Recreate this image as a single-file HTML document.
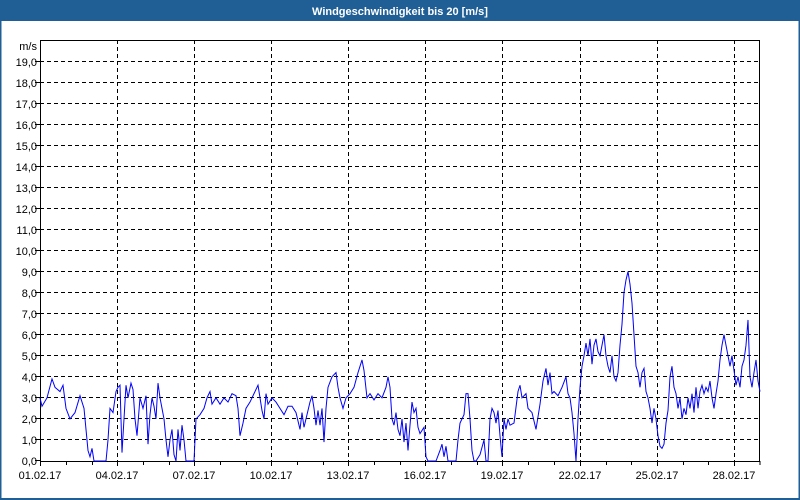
<!DOCTYPE html>
<html><head><style>
body{margin:0;width:800px;height:500px;overflow:hidden;background:#fff;font-family:"Liberation Sans",Tahoma,sans-serif}
</style></head><body>
<svg width="800" height="500" xmlns="http://www.w3.org/2000/svg" style="display:block">
<rect x="0" y="0" width="800" height="500" fill="#fff"/>
<rect x="0" y="0" width="800" height="21" fill="#1f5f95"/>
<rect x="0.5" y="20" width="799" height="479" fill="none" stroke="#1f5f95" stroke-width="2"/>
<text x="400" y="15" text-anchor="middle" fill="#fff" font-size="11" font-weight="bold" font-family="Liberation Sans, sans-serif">Windgeschwindigkeit bis 20 [m/s]</text>
<g stroke="#000" stroke-width="1" stroke-dasharray="4,3" fill="none">
<path id="hg" d="M40 61.5H760M40 82.5H760M40 103.5H760M40 124.5H760M40 145.5H760M40 166.5H760M40 187.5H760M40 208.5H760M40 229.5H760M40 250.5H760M40 271.5H760M40 292.5H760M40 313.5H760M40 334.5H760M40 355.5H760M40 376.5H760M40 397.5H760M40 418.5H760M40 439.5H760"/>
<path d="M117.5 40V461M194.5 40V461M271.5 40V461M348.5 40V461M425.5 40V461M502.5 40V461M580.5 40V461M657.5 40V461M734.5 40V461"/>
</g>
<rect x="40.5" y="40.5" width="719" height="421" fill="none" stroke="#000"/>
<path d="M40.5 461V466M66.5 461V465M92.5 461V465M117.5 461V466M143.5 461V465M169.5 461V465M194.5 461V466M220.5 461V465M246.5 461V465M271.5 461V466M297.5 461V465M323.5 461V465M348.5 461V466M374.5 461V465M400.5 461V465M425.5 461V466M451.5 461V465M477.5 461V465M502.5 461V466M528.5 461V465M554.5 461V465M580.5 461V466M606.5 461V465M631.5 461V465M657.5 461V466M683.5 461V465M708.5 461V465M734.5 461V466M760 461V465M35 61.5H40M35 82.5H40M35 103.5H40M35 124.5H40M35 145.5H40M35 166.5H40M35 187.5H40M35 208.5H40M35 229.5H40M35 250.5H40M35 271.5H40M35 292.5H40M35 313.5H40M35 334.5H40M35 355.5H40M35 376.5H40M35 397.5H40M35 418.5H40M35 439.5H40M35 460.5H40" stroke="#000"/>
<g font-size="11" fill="#000" text-anchor="end" font-family="Liberation Sans, sans-serif">
<text x="37" y="50">m/s</text>
<text x="37" y="66">19,0</text><text x="37" y="87">18,0</text><text x="37" y="108">17,0</text><text x="37" y="129">16,0</text><text x="37" y="150">15,0</text><text x="37" y="171">14,0</text><text x="37" y="192">13,0</text><text x="37" y="213">12,0</text><text x="37" y="234">11,0</text><text x="37" y="255">10,0</text><text x="37" y="276">9,0</text><text x="37" y="297">8,0</text><text x="37" y="318">7,0</text><text x="37" y="339">6,0</text><text x="37" y="360">5,0</text><text x="37" y="381">4,0</text><text x="37" y="402">3,0</text><text x="37" y="423">2,0</text><text x="37" y="444">1,0</text><text x="37" y="465">0,0</text>
</g>
<g font-size="11" fill="#000" text-anchor="middle" font-family="Liberation Sans, sans-serif">
<text x="40" y="479">01.02.17</text><text x="117" y="479">04.02.17</text><text x="194" y="479">07.02.17</text><text x="271" y="479">10.02.17</text><text x="348" y="479">13.02.17</text><text x="425" y="479">16.02.17</text><text x="502" y="479">19.02.17</text><text x="580" y="479">22.02.17</text><text x="657" y="479">25.02.17</text><text x="734" y="479">28.02.17</text>
</g>
<g transform="translate(0,461) scale(1,-21.05)">
<polyline fill="none" stroke="#0000ff" stroke-width="1" vector-effect="non-scaling-stroke" points="40,3 42,2.6 47,3 52,3.9 55,3.5 60,3.3 63,3.6 66,2.5 70,2 75,2.3 80,3.1 84,2.5 86,1.5 88,0.5 90,0.2 92,0.6 94,0 98,0 102,0 106,0 108,1 110,2.5 113,2.3 116,3.3 118,3.5 120,3.6 122,0.4 124,2 126,3.6 128,3 131,3.7 133,3.4 135,2 137,1.2 140,3 143,2.5 146,3.1 148,0.8 150,2.2 152,3 154,2.6 156,2 158,3.7 160,3 162,2.5 164,2 166,1 168,0.2 170,1 172,1.5 174,0.3 176,0 178,1.5 180,0.5 182,1.7 184,1 186,0 190,0 194,0 196,2 200,2.2 204,2.5 207,3 210,3.3 212,2.7 216,3 220,2.7 224,3 228,2.8 232,3.2 236,3.1 238,2.5 240,1.2 243,1.8 246,2.5 250,2.8 254,3.2 258,3.6 262,2.4 264,2 266,3.2 268,2.7 272,3 276,2.8 280,2.5 284,2.2 288,2.6 292,2.6 296,2.3 300,1.5 302,2.3 304,1.6 306,2 310,2.8 312,3.1 314,2.5 316,1.7 318,2.4 320,1.7 322,2.5 324,0.9 326,2.5 328,3.5 332,4 336,4.2 338,3.5 340,3 343,2.5 346,3 350,3.2 354,3.5 358,4.2 362,4.8 364,4.3 367,3 370,3.2 374,2.9 378,3.2 382,3 386,3.5 388,4 390,3.5 392,2 394,1.7 396,2.3 398,1.5 400,1.2 402,2 404,0.9 406,1.8 408,0.5 410,1.7 412,2.8 414,2.3 416,2.5 418,1.6 420,1.3 424,1.6 426,0.2 428,0 432,0 436,0 440,0.5 442,0.8 444,0.2 446,0.7 448,0 452,0 456,0 458,1 460,1.8 462,2 464,2.2 466,3.2 468,3.2 470,2 472,0.5 474,0 476,0 480,0.3 484,1 486,0 488,0 490,2 492,2.5 494,2.3 496,1.8 498,2.4 500,1.2 502,0.2 504,2 506,1.5 508,2 510,1.7 514,1.8 518,3.3 520,3.6 522,3 526,3.2 528,2.5 532,2.3 536,1.5 540,2.7 543,3.8 546,4.4 548,3.6 550,4.2 552,3.2 554,3.3 558,3.1 562,3.5 566,4 568,3.2 570,3 572,2.3 574,1.3 576,0 578,2 580,3.5 582,4.5 584,5 586,5.6 588,5 590,5.8 592,4.6 594,5.5 596,5.8 598,5.2 600,5 602,5.5 604,6 606,5 608,4.5 610,4.2 612,5 614,4 616,3.8 618,4.2 620,5.5 622,6.5 624,8 626,8.6 628,9 630,8.4 632,7.5 634,6 636,4.5 638,4.2 640,3.5 642,4.2 644,4.4 646,3.3 648,3 650,2.5 652,1.8 654,2.5 656,2 658,1.2 660,0.7 662,0.6 664,0.8 666,1.8 668,2.4 670,4 672,4.5 674,3.5 676,3.2 678,2.5 680,3 682,2 684,2.5 686,2.2 688,3 690,2.5 692,3.2 694,2.3 696,3.5 698,2.5 700,3.3 702,3.6 704,3.2 706,3.5 708,3.3 710,3.8 712,3 714,2.5 716,3.2 718,3.8 720,4.8 722,5.5 724,6 726,5.5 728,5 730,4.5 732,5 734,4.3 736,3.6 738,4 740,3.5 742,4.5 744,4.8 746,5.5 748,6.7 750,4 752,3.5 754,4.2 756,4.8 758,3.8 760,3.3"/>
</g>
</svg>
</body></html>
